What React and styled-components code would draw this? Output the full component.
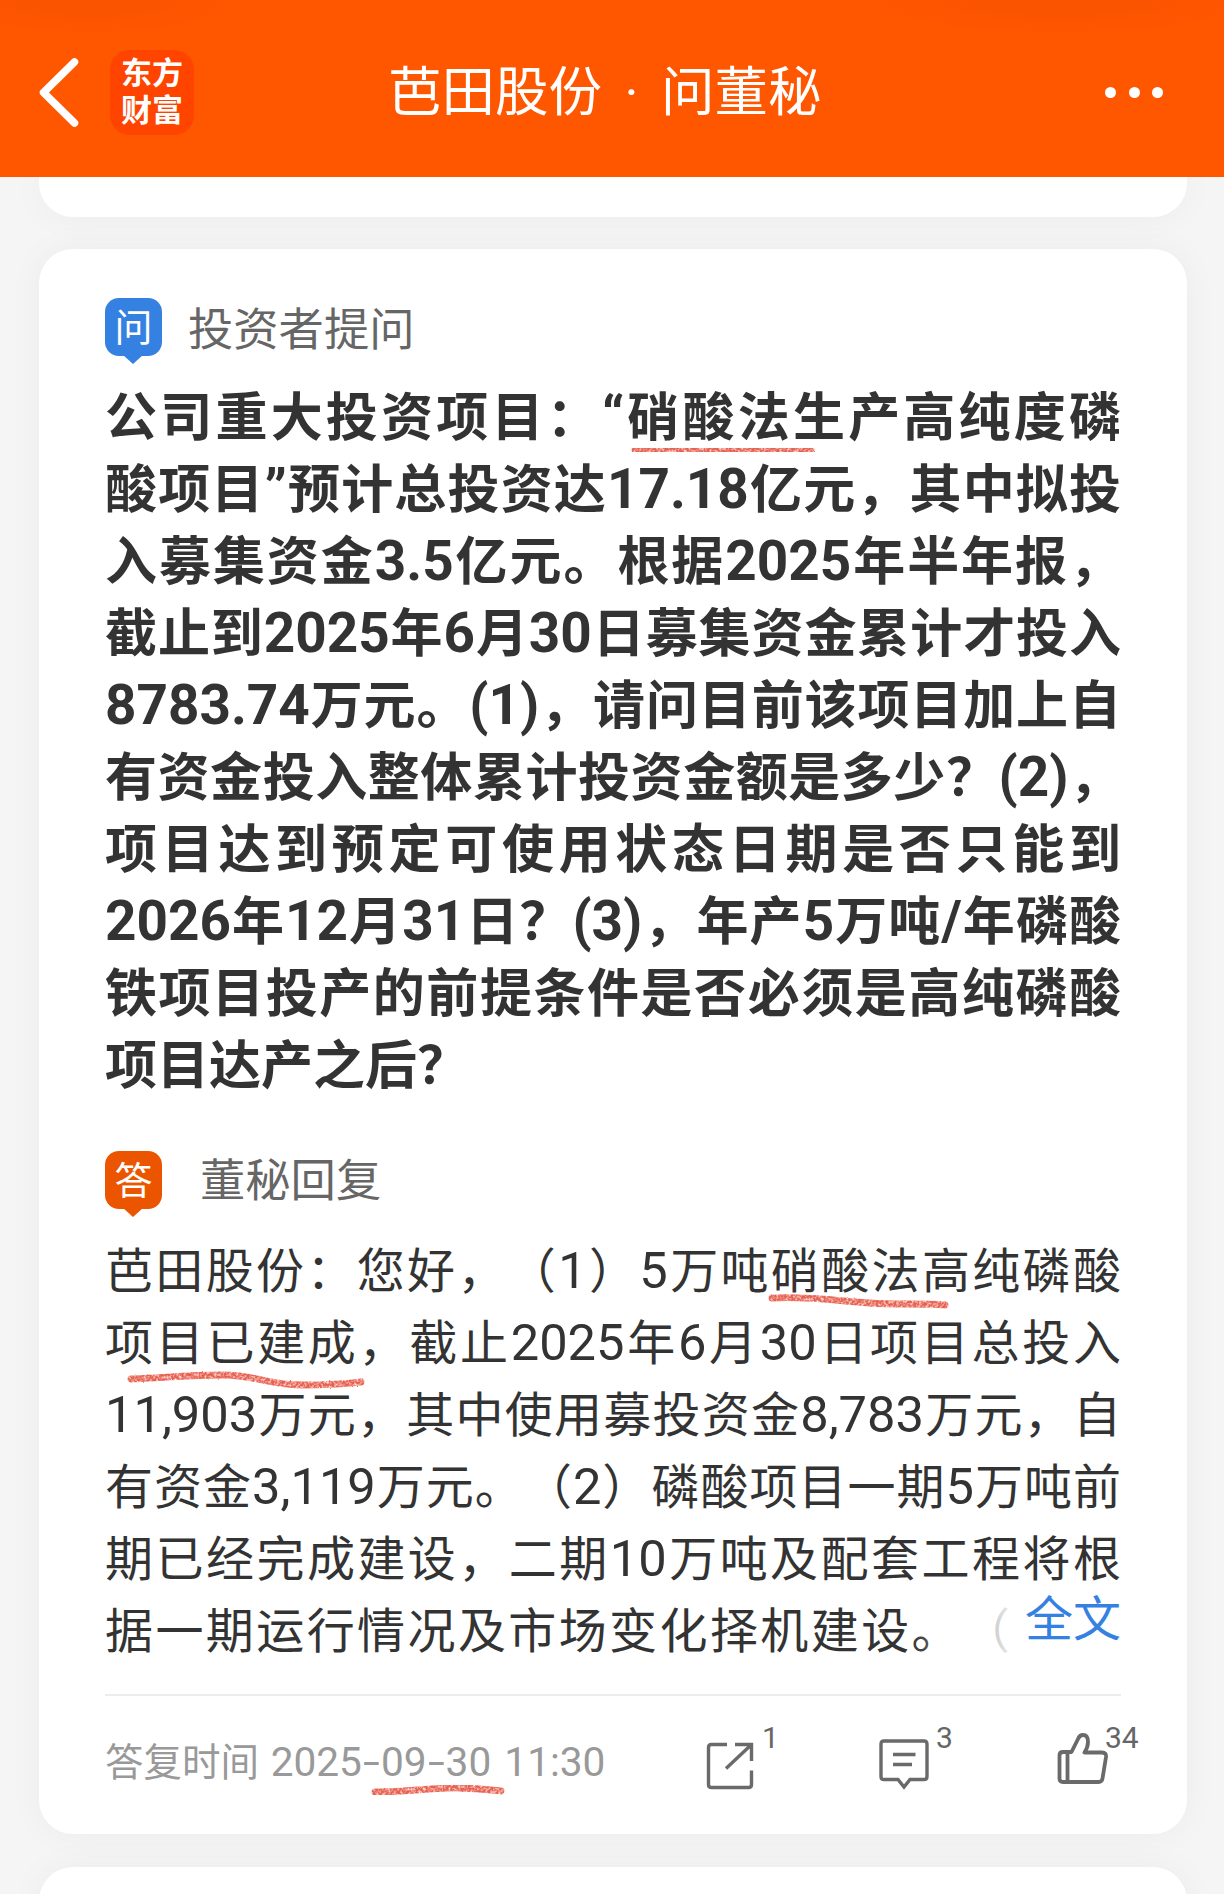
import React from "react";
import styled, { createGlobalStyle } from "styled-components";

const QUESTION = [
  "公司重大投资项目：“硝酸法生产高纯度磷",
  "酸项目”预计总投资达17.18亿元，其中拟投",
  "入募集资金3.5亿元。根据2025年半年报，",
  "截止到2025年6月30日募集资金累计才投入",
  "8783.74万元。(1)，请问目前该项目加上自",
  "有资金投入整体累计投资金额是多少？(2)，",
  "项目达到预定可使用状态日期是否只能到",
  "2026年12月31日？(3)，年产5万吨/年磷酸",
  "铁项目投产的前提条件是否必须是高纯磷酸",
  "项目达产之后？",
];

const ANSWER = [
  "芭田股份：您好，（1）5万吨硝酸法高纯磷酸",
  "项目已建成，截止2025年6月30日项目总投入",
  "11,903万元，其中使用募投资金8,783万元，自",
  "有资金3,119万元。（2）磷酸项目一期5万吨前",
  "期已经完成建设，二期10万吨及配套工程将根",
  "据一期运行情况及市场变化择机建设。（",
];

// hand drawn marker lines, placed on the card
const MARKS = [
  { x: 593, y: 194, w: 183, d: "M3 7 C40 5 70 8 100 7 S150 9 179 6" },
  { x: 730, y: 1042, w: 182, d: "M3 7 C40 5 70 10 100 12 S150 12 176 14" },
  { x: 88, y: 1120, w: 242, d: "M4 10 C40 9 60 6 95 6 S140 16 175 16 S215 15 234 13" },
  { x: 332, y: 1532, w: 136, d: "M4 11 C40 11 65 6 90 7 S120 9 130 10" },
];

const mixed = (text) =>
  text
    .split(/([0-9.,()/“”]+)/)
    .map((part, i) => (i % 2 ? <Latin key={i}>{part}</Latin> : part));

const BackIcon = () => (
  <svg width="41" height="71" viewBox="0 0 41 71" fill="none">
    <path
      d="M35.5 5 L4.5 35.5 L35.5 66"
      stroke="#fff"
      strokeWidth="7.5"
      strokeLinecap="round"
      strokeLinejoin="round"
    />
  </svg>
);

const ShareIcon = () => (
  <svg width="48" height="50" viewBox="0 0 48 50" fill="none" stroke="#6a6a6a" strokeWidth="3.4">
    <path d="M21 3.5 H5.5 Q2.5 3.5 2.5 6.5 V43.5 Q2.5 46.5 5.5 46.5 H42.5 Q45.5 46.5 45.5 43.5 V29.5" />
    <path d="M29 3.5 H45.5 V20 M45 4 L20 27.5" />
  </svg>
);

const CommentIcon = () => (
  <svg width="50" height="52" viewBox="0 0 50 52" fill="none" stroke="#6a6a6a" strokeWidth="3.4">
    <path d="M5 2 H45 Q48 2 48 5 V37.5 Q48 40.5 45 40.5 H31 L25 48 L19 40.5 H5 Q2 40.5 2 37.5 V5 Q2 2 5 2 Z" />
    <path d="M14 15.5 H36.5 M14 25.5 H33" />
  </svg>
);

const LikeIcon = () => (
  <svg width="51" height="52" viewBox="0 0 51 52" fill="none" stroke="#6a6a6a" strokeWidth="3.8" strokeLinejoin="round">
    <path d="M14.5 19 L21 6 Q22.5 2 26 2 Q31 2 31 9 Q31 14 27.5 19.5 H45 Q49.5 19.5 49 24 L45.5 45.5 Q45 49 41.5 49 H6 Q2.5 49 2.5 45.5 V22.5 Q2.5 19 6 19 Z" />
    <path d="M10.5 19 V49" />
  </svg>
);

const ACTIONS = [
  { icon: <ShareIcon />, count: 1, width: 173, gap: 8, top: 14 },
  { icon: <CommentIcon />, count: 3, width: 178, gap: 7, top: 12 },
  { icon: <LikeIcon />, count: 34, width: 86, gap: -3, top: 6 },
];

const App = () => {
  return (
    <Page lang="zh-CN">
      <GlobalStyle />
      <Header>
        <BackButton>
          <BackIcon />
        </BackButton>
        <Logo>
          <span>东方</span>
          <span>财富</span>
        </Logo>
        <Title>
          芭田股份<Dot>·</Dot>问董秘
        </Title>
        <More>
          <i />
          <i />
          <i />
        </More>
      </Header>
      <PrevCard />
      <Card>
        <Row>
          <Badge $color="#3581e2">问</Badge>
          <Label $gap="26px">投资者提问</Label>
        </Row>
        <Question>
          {QUESTION.map((line, i) => (
            <Line key={line} $natural={i === QUESTION.length - 1}>
              {mixed(line)}
            </Line>
          ))}
        </Question>
        <Row>
          <Badge $color="#eb5500">答</Badge>
          <Label $gap="38px" $height="52px">
            董秘回复
          </Label>
        </Row>
        <Answer>
          {ANSWER.map((line, i) => (
            <Line key={line} $width={i === ANSWER.length - 1 ? "905px" : "100%"}>
              {mixed(line)}
            </Line>
          ))}
          <FullText>全文</FullText>
        </Answer>
        <Footer>
          <Time>
            答复时间{" "}
            <Latin>
              2025<Dash>-</Dash>09<Dash>-</Dash>30 11:30
            </Latin>
          </Time>
          {ACTIONS.map((a) => (
            <Action key={a.count} $width={a.width} $top={a.top}>
              {a.icon}
              <Count $gap={a.gap}>{a.count}</Count>
            </Action>
          ))}
        </Footer>
        {MARKS.map((m) => (
          <Mark key={m.y} $x={m.x} $y={m.y} width={m.w} height="22">
            <filter id={`crayon${m.y}`} x="-5%" y="-50%" width="110%" height="200%">
              <feTurbulence type="fractalNoise" baseFrequency="0.4" numOctaves="2" result="n" />
              <feDisplacementMap in="SourceGraphic" in2="n" scale="2" result="s" />
              <feColorMatrix in="n" type="matrix" values="0 0 0 0 0  0 0 0 0 0  0 0 0 0 0  0 1.8 0 0 -0.1" result="a" />
              <feComposite in="s" in2="a" operator="in" />
              <feGaussianBlur stdDeviation="0.6" />
            </filter>
            <path d={m.d} stroke="#e8604f" strokeWidth="6.8" strokeLinecap="round" fill="none" filter={`url(#crayon${m.y})`} />
          </Mark>
        ))}
      </Card>
      <NextCard />
    </Page>
  );
};

const GlobalStyle = createGlobalStyle`
  * {
    box-sizing: border-box;
  }
  body {
    margin: 0;
    background: #f5f5f5;
    font-family: "Noto Sans CJK SC", sans-serif;
    text-spacing-trim: space-all;
  }
`;

const Page = styled.div`
  width: 1224px;
  height: 1894px;
  overflow: hidden;
  background: #f5f5f5;
`;

const Header = styled.header`
  position: relative;
  z-index: 1;
  display: flex;
  height: 177px;
  padding: 50px 61px 0 39px;
  background: radial-gradient(ellipse 150px 34px at 90px 0, #fb5400 40%, transparent),
    radial-gradient(ellipse 200px 34px at 1060px 0, #fb5400 40%, transparent), #ff5600;
  color: #fff;
`;

const BackButton = styled.div`
  width: 71px;
  padding-top: 7px;
`;

const Logo = styled.div`
  display: flex;
  flex-direction: column;
  align-items: center;
  width: 84px;
  height: 85px;
  padding-top: 2px;
  border-radius: 20px;
  background: #ff4400;
  font-size: 31px;
  font-weight: 700;
  line-height: 37px;
`;

const Title = styled.h1`
  flex: 1;
  margin: 0 0 0 194px;
  font-size: 53.5px;
  font-weight: 400;
  line-height: 76px;
  white-space: nowrap;
`;

const Dot = styled.span`
  display: inline-block;
  width: 59px;
  font-family: Roboto, sans-serif;
  line-height: 0;
  text-align: center;
`;

const More = styled.div`
  display: flex;
  gap: 12.5px;
  padding-top: 37px;
  i {
    width: 11px;
    height: 11px;
    border-radius: 50%;
    background: #fff;
  }
`;

const Card = styled.section`
  position: relative;
  width: 1148px;
  height: 1585px;
  margin: 32px 0 0 39px;
  padding: 49px 66px 0;
  border-radius: 34px;
  background: #fff;
  box-shadow: 0 0 36px rgba(0, 0, 0, 0.045);
`;

const PrevCard = styled(Card)`
  height: 40px;
  margin-top: 0;
  padding: 0;
  border-radius: 0 0 34px 34px;
`;

const NextCard = styled(Card)`
  height: 100px;
  margin-top: 33px;
`;

const Row = styled.div`
  display: flex;
  align-items: flex-start;
`;

const Badge = styled.span`
  position: relative;
  width: 57px;
  height: 58px;
  border-radius: 14px;
  background: ${(p) => p.$color};
  color: #fff;
  font-size: 38px;
  line-height: 54px;
  text-align: center;
  &::after {
    content: "";
    position: absolute;
    left: 18px;
    top: 57px;
    border: solid transparent;
    border-width: 9px 10.5px 0;
    border-top-color: ${(p) => p.$color};
  }
`;

const Label = styled.span`
  margin-left: ${(p) => p.$gap};
  color: #666;
  font-size: 45.3px;
  line-height: ${(p) => p.$height || "56px"};
`;

const Question = styled.div`
  height: 773px;
  margin-top: 22px;
  color: #333;
  font-size: 52px;
  font-weight: 700;
`;

const Answer = styled.div`
  position: relative;
  height: 463px;
  margin-top: 22px;
  color: #333;
  font-size: 48px;
`;

const Line = styled.div`
  width: ${(p) => p.$width || "100%"};
  height: 72px;
  line-height: 72px;
  text-align: justify;
  text-align-last: ${(p) => (p.$natural ? "left" : "justify")};
  white-space: nowrap;
`;

const Latin = styled.span`
  font-family: Roboto, "Noto Sans CJK SC", sans-serif;
  font-size: 1.055em;
  line-height: 0;
`;

const FullText = styled.a`
  position: absolute;
  right: 0;
  top: 360px;
  height: 72px;
  padding-left: 114px;
  background: linear-gradient(to right, rgba(255, 255, 255, 0), #fff 110px);
  color: #3581e2;
  line-height: 48px;
`;

const Footer = styled.footer`
  display: flex;
  border-top: 2px solid #ededed;
  padding-top: 27px;
`;

const Time = styled.span`
  flex: none;
  width: 601px;
  color: #999;
  font-size: 38.5px;
  line-height: 72px;
  white-space: nowrap;
  word-spacing: 3px;
`;

const Dash = styled.span`
  display: inline-block;
  width: 19px;
  text-align: center;
  transform: scaleX(1.5);
`;

const Action = styled.div`
  display: flex;
  align-items: flex-start;
  flex: none;
  width: ${(p) => p.$width}px;
  svg {
    flex: none;
    margin-top: ${(p) => p.$top + 4}px;
  }
`;

const Count = styled.span`
  margin-left: ${(p) => p.$gap}px;
  color: #666;
  font-family: Roboto, sans-serif;
  font-size: 30px;
  line-height: 30px;
`;

const Mark = styled.svg`
  position: absolute;
  left: ${(p) => p.$x}px;
  top: ${(p) => p.$y}px;
  overflow: visible;
`;

export default App;
